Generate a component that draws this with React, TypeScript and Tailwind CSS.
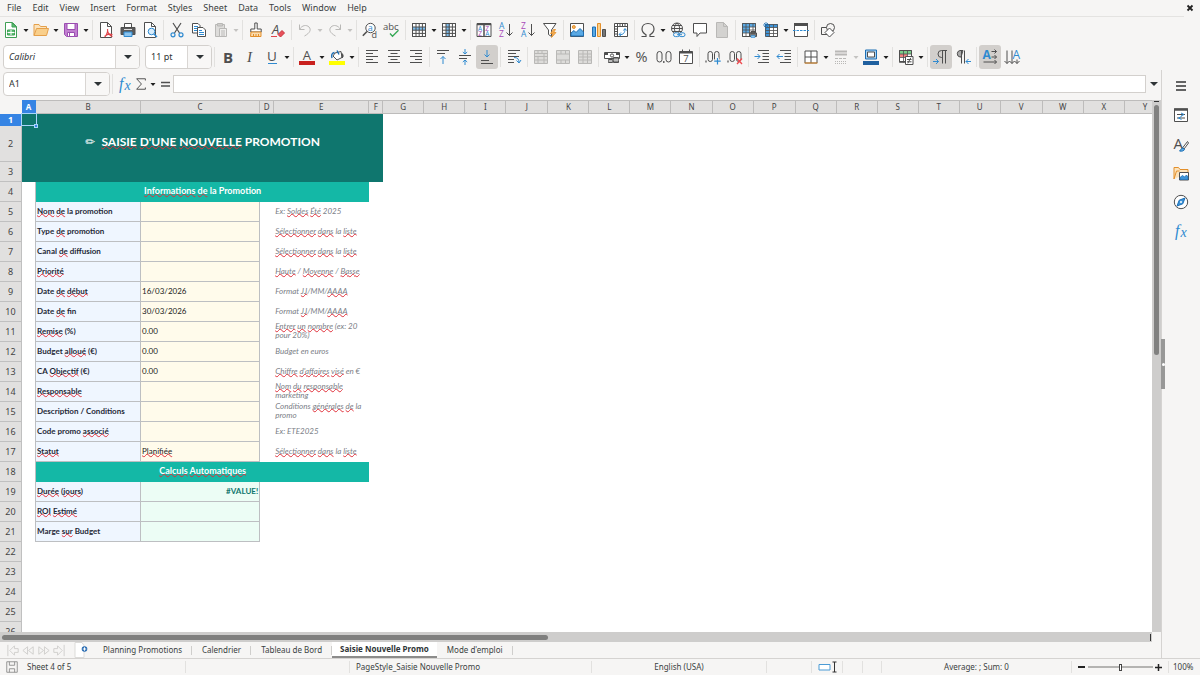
import React from 'react';

const K = '#4f4f4f';
const B = '#2f8ad0';
const G = '#b9b8b6';

type IconProps = { children: React.ReactNode; className?: string };

function Svg({ children, className = 'h-4 w-4' }: IconProps) {
  return (
    <svg viewBox="0 0 16 16" className={`${className} shrink-0 overflow-visible`} fill="none" stroke={K} strokeWidth={1} aria-hidden="true">
      {children}
    </svg>
  );
}

type GlyphProps = { x: number; y: number; size: number; fill?: string; serif?: boolean; italic?: boolean; bold?: boolean; children: string };

function Glyph({ x, y, size, fill = K, serif, italic, bold, children }: GlyphProps) {
  return (
    <text
      x={x}
      y={y}
      fontSize={size}
      fill={fill}
      stroke="none"
      fontStyle={italic ? 'italic' : 'normal'}
      fontWeight={bold ? 700 : 400}
      fontFamily={serif ? '"Liberation Serif", serif' : '"Open Sans", "Noto Sans", sans-serif'}
    >
      {children}
    </text>
  );
}

const page = 'M2.5 .5h7l4 4v11h-11z';
const grid = 'M1.5 1.5h13v13h-13zM1.5 5h13M1.5 8.2h13M1.5 11.4h13M5 1.5v13M8.2 1.5v13M11.4 1.5v13';

const icons: Record<string, React.ReactNode> = {
  new: (
    <>
      <path d={page} fill="#fff" stroke="#3f9f55" />
      <path d="M9 1v4h4.500z" fill="#5cc074" stroke="#3f9f55" />
      <path d="M4.500 8h7v5h-7z" fill="#5cc074" stroke="#3f9f55" />
      <path d="M4.500 10.500h7M8 8v5" stroke="#fff" />
    </>
  ),
  open: (
    <>
      <path d="M1 13.500V2.500h5l1.500 2h6v2" fill="#fbe3bd" stroke="#e5a04a" />
      <path d="M1 13.500l2.500-7h12l-2 7z" fill="#f9cf8b" stroke="#e5a04a" />
    </>
  ),
  save: (
    <>
      <path d="M1.500 1.500h13v13h-11l-2-2z" fill="#c17fd0" stroke="#9a4db0" />
      <path d="M4 1.500h8v6H4z" fill="#fff" stroke="#9a4db0" />
      <path d="M4.500 10.500h7v4h-7z" fill="#fff" stroke="#9a4db0" />
      <path d="M6.500 11v3" stroke="#9a4db0" />
    </>
  ),
  pdf: (
    <>
      <path d={page} fill="#fff" />
      <path d="M9.500 .5v4h4" />
      <path d="M7 15c2-3 3-6 2.500-8M6.500 14.500c2-2 5-3 8-2M9.500 9c.5 2 2.500 4.500 5 5.500" stroke="#e0444a" strokeWidth="1.200" />
    </>
  ),
  print: (
    <>
      <path d="M4.500 6V1.500h7V6" fill="#fff" />
      <path d="M1 5.500h14v7H1z" fill="#5a5a5a" />
      <path d="M4 10h8v4.500H4z" fill="#8cc4ee" stroke="#2f8ad0" />
      <path d="M4 7.500h8" stroke="#ddd" />
    </>
  ),
  preview: (
    <>
      <path d={page} fill="#fff" />
      <path d="M9.500 .5v4h4" />
      <circle cx="9.500" cy="9.500" r="3.300" fill="#d7ecfb" stroke={B} />
      <path d="M12 12l3 3" stroke={B} strokeWidth="1.500" />
    </>
  ),
  cut: (
    <>
      <path d="M4 1l6.500 10M12 1L5.500 11" strokeWidth="1.200" />
      <circle cx="4" cy="12.800" r="2" stroke={B} strokeWidth="1.200" />
      <circle cx="12" cy="12.800" r="2" stroke={B} strokeWidth="1.200" />
    </>
  ),
  copy: (
    <>
      <path d="M1.500 1.500h5.500l2 2v7.500h-7.500z" fill="#fff" />
      <path d="M3 4.500h4M3 6.500h3M3 8.500h3" stroke={B} />
      <path d="M6.500 5.500h5.500l2.500 2.500v6.500h-8z" fill="#fff" />
      <path d="M8 8.500h3M8 10.500h5M8 12.500h5" stroke={B} />
    </>
  ),
  paste: (
    <>
      <path d="M2.500 2.500h9v12h-9z" fill="#dddcda" stroke={G} />
      <path d="M4.500 1.500h5v2.500h-5z" fill="#cfcecc" stroke={G} />
      <path d="M6.500 6.500h7v8h-7z" fill="#eeedec" stroke={G} />
      <path d="M8 9h4M8 11h4M8 13h4" stroke={G} />
    </>
  ),
  clone: (
    <>
      <path d="M6.800 1h2.400v6h4v3H2.800V7h4z" fill="#fff" />
      <path d="M3 10h10v4.500H2.500z" fill="#fbdcae" stroke="#e38f2a" />
      <path d="M5.500 12v2.500M8 12v2.500M10.500 12v2.500" stroke="#e38f2a" />
    </>
  ),
  clear: (
    <>
      <Glyph x={2} y={12} size={13} italic>A</Glyph>
      <path d="M8 12.500l4-4 2.500 2.500-4 4z" fill="#e8505a" stroke="#c8323c" />
      <path d="M1 14.500h6" stroke="#e0444a" />
    </>
  ),
  undo: <path d="M2.500 2.500v5h5M2.500 7.500C5 3 9.500 2.500 12 5c2.500 2.600 1 6-4.500 9" stroke={G} />,
  redo: <path d="M13.500 2.500v5h-5M13.500 7.500C11 3 6.500 2.500 4 5c-2.500 2.600-1 6 4.500 9" stroke={G} />,
  find: (
    <>
      <circle cx="8.500" cy="6" r="4.700" fill="#fff" />
      <path d="M5 9.500L.8 13.800" strokeWidth="1.600" />
      <Glyph x={5.800} y={9} size={9} fill={B}>a</Glyph>
      <Glyph x={9.500} y={15.500} size={9}>d</Glyph>
    </>
  ),
  spell: (
    <>
      <Glyph x={-1} y={8} size={9.500}>abc</Glyph>
      <path d="M6 11.500l2.500 2.800 6-6" stroke="#35a854" strokeWidth="1.300" />
    </>
  ),
  row: (
    <>
      <path d="M1.500 1.500h13v13h-13z" fill="#fff" />
      <path d="M1.500 5h13v3.200h-13z" fill="#7cbcec" stroke="none" />
      <path d={grid} />
    </>
  ),
  col: (
    <>
      <path d="M1.500 1.500h13v13h-13z" fill="#fff" />
      <path d="M5 1.500h4v13H5z" fill="#7cbcec" stroke="none" />
      <path d={grid} />
    </>
  ),
  sort: (
    <>
      <path d="M1 1.500h14v13H1z" fill="#fff" />
      <path d="M1 2.500h14M8 1.500v13" strokeWidth="1.500" />
      <Glyph x={2} y={8.800} size={6.500} fill={B}>A</Glyph>
      <Glyph x={2.200} y={14} size={6.500} fill="#a848b8">Z</Glyph>
      <Glyph x={9.300} y={8.800} size={6.500} fill="#a848b8">Z</Glyph>
      <Glyph x={9.200} y={14} size={6.500} fill={B}>A</Glyph>
    </>
  ),
  asc: (
    <>
      <Glyph x={1} y={7} size={8.500} fill={B}>A</Glyph>
      <Glyph x={1} y={15} size={8.500} fill="#a848b8">Z</Glyph>
      <path d="M11.500 2v11.500M8.500 10.500l3 3 3-3" />
    </>
  ),
  desc: (
    <>
      <Glyph x={1} y={7} size={8.500} fill="#a848b8">Z</Glyph>
      <Glyph x={1} y={15} size={8.500} fill={B}>A</Glyph>
      <path d="M11.500 2v11.500M8.500 10.500l3 3 3-3" />
    </>
  ),
  filter: (
    <>
      <path d="M1.500 1.500h12.500L9.500 8v6.500l-3-2V8z" fill="#fff" />
      <path d="M11.500 7.500l-3 4h2.500l-1.500 4 4.500-5h-2.500l2-3z" fill="#f7b35c" stroke="#e38f2a" strokeWidth=".8" />
    </>
  ),
  image: (
    <>
      <path d="M1.500 1.500h13v13h-13z" fill="#fff" />
      <circle cx="4.800" cy="5" r="1.500" fill="#f7b35c" stroke="#e38f2a" />
      <path d="M2 14v-3l3-2.500 2 2 4-4 3.500 3.500v4z" fill="#5aa9e4" stroke="#1d6fb5" />
    </>
  ),
  chart: (
    <>
      <path d="M1.500 5h3v9.500h-3z" fill="#5aa9e4" stroke="#1d6fb5" />
      <path d="M6.500 1.500h3v13h-3z" fill="#f9cf8b" stroke="#e38f2a" />
      <path d="M11.500 7.500h3v7h-3z" fill="#777" />
    </>
  ),
  pivot: (
    <>
      <path d="M1.500 1.500h13v13h-13z" fill="#fff" />
      <path d="M1.500 4.500h13M4.500 1.500v13M7 2v2M9.500 2v2M12 2v2M2 7h2M2 9.500h2M2 12h2" />
      <path d="M6.500 12.500c4 .5 5.500-2 5.500-5.500M10.500 8.500L12 6.500l1.500 2M8 10.500l-2 2 2 1.500" stroke={B} />
    </>
  ),
  omega: <path d="M1.500 14.500h4.500v-1.800C3 11 2 9.300 2 7c0-3.500 2.700-5.500 6-5.500S14 3.500 14 7c0 2.300-1 4-4 5.700v1.800h4.500" strokeWidth="1.200" />,
  link: (
    <>
      <circle cx="7" cy="6.500" r="5.500" />
      <path d="M7 1c-3.500 3.500-3.500 7.500 0 11M7 1c3.500 3.500 3.500 7.500 0 11M1.500 6.500h11M2.500 3.500h9M2.500 9.500h9" />
      <rect x="3.500" y="10.800" width="6" height="3.800" rx="1.900" fill="#f6f5f4" stroke={B} />
      <rect x="9" y="10.800" width="6" height="3.800" rx="1.900" fill="#f6f5f4" stroke={B} />
      <path d="M7 12.700h5" stroke={B} />
    </>
  ),
  comment: <path d="M1.500 1.500h13v9.500H8l-3 3.500V11H1.500z" fill="#fff" />,
  header: (
    <>
      <path d={page} fill="#d3d2d0" stroke={G} />
      <path d="M9.500 .5v4h4" stroke={G} />
    </>
  ),
  printarea: (
    <>
      <path d="M1.500 1.500h13v13h-13z" fill="#fff" />
      <path d="M1.500 1.500h13v3.500h-13zM1.500 5h7v6h-7z" fill="#5aa9e4" stroke="none" />
      <path d="M1.500 1.500h13v13h-13zM1.500 5h13M1.500 8h13M1.500 11h13M5 1.500v13M8.500 1.500v13M12 1.500v8" strokeWidth=".8" />
      <path d="M8.500 11h7v3.500h-7zM10 9.500h4V11h-4z" fill="#777" />
      <path d="M10 13.500h4v2h-4z" fill="#8cc4ee" stroke={B} strokeWidth=".6" />
    </>
  ),
  freeze: (
    <>
      <path d="M3.500 2.500h11v12h-11z" fill="#fff" />
      <path d="M2 2h13v3.500H2zM2 2h4.500v12.500H2z" fill="#3f94d8" stroke="none" />
      <path d="M2.500 2.500h12v12h-12zM2.500 5.500h12M2.500 8.500h12M2.500 11.500h12M6.500 2.500v12M10.500 2.500v12" strokeWidth=".8" />
      <path d="M3 0v7M0 3h6M1 1l4 4M5 1L1 5" stroke="#1d6fb5" strokeWidth=".8" />
    </>
  ),
  split: (
    <>
      <path d="M1.500 1.500h13v13h-13z" fill="#fff" />
      <path d="M1 2.500h14" strokeWidth="3" />
      <path d="M0 8.500h16" stroke={B} strokeDasharray="2.500 1" />
    </>
  ),
  shapes: (
    <>
      <path d="M1.500 5.500h7v7h-7z" />
      <circle cx="10.500" cy="5.500" r="4" fill="#f6f5f4" />
      <path d="M9.500 6l4.500 4.500-4.500 4.500L5 10.500z" fill="#fff" />
    </>
  ),
  bold: <Glyph x={3} y={13.500} size={15} bold>B</Glyph>,
  italic: <Glyph x={5} y={13} size={15} serif italic>I</Glyph>,
  underline: (
    <>
      <Glyph x={3} y={12} size={13.500}>U</Glyph>
      <path d="M4 14.500h9" stroke={B} />
    </>
  ),
  fontcolor: (
    <>
      <Glyph x={3.800} y={11} size={13}>A</Glyph>
      <path d="M0 14h16" stroke="#c9211e" strokeWidth="4" />
    </>
  ),
  fillcolor: (
    <>
      <path d="M6 4l6-1.500 1 6-5 2.500-4-4z" fill="#fff" />
      <path d="M3 9c-1-3 0-5 2.500-5.500M8 1.500l2 4" stroke="#1d6fb5" strokeWidth="1.400" />
      <path d="M13 4.500c1.500 1.500 1.500 3.500 0 4.500z" fill={K} />
      <path d="M0 14h16" stroke="#ffff00" strokeWidth="4" />
    </>
  ),
  left: <path d="M2 1.500h12M2 4.500h7M2 7.500h12M2 10.500h7M2 13.500h12" />,
  center: <path d="M2 1.500h12M4.500 4.500h7M2 7.500h12M4.500 10.500h7M2 13.500h12" />,
  right: <path d="M2 1.500h12M7 4.500h7M2 7.500h12M7 10.500h7M2 13.500h12" />,
  top: (
    <>
      <path d="M2 1.500h12M2 4.500h8" />
      <path d="M8 15V7.500M5.500 10L8 7.500l2.500 2.500" stroke={B} />
    </>
  ),
  middle: (
    <>
      <path d="M2 6.500h12M2 9.500h8" />
      <path d="M8 0v5M5.800 3L8 5l2.200-2M8 16v-5M5.800 13L8 11l2.200 2" stroke={B} />
    </>
  ),
  bottom: (
    <>
      <path d="M2 11.500h8M2 14.500h12" />
      <path d="M8 1v7M5.500 5.500L8 8l2.500-2.500" stroke={B} />
    </>
  ),
  wrap: (
    <>
      <path d="M2 1.500h12M2 4.500h8M2 7.500h11M2 10.500h6M2 13.500h6" />
      <path d="M8 8.500c3.500 0 5 1.500 5 5M10.500 11.500l2.500 2.500 2-3" stroke={B} />
    </>
  ),
  merge: (
    <>
      <path d="M1.500 1.500h13v13h-13z" fill="#dddcda" stroke={G} />
      <path d="M1.500 4.500h13M1.500 7.500h13M1.500 11h13M5 1.500v3M9 1.500v3M5 7.500v7M11 4.500v10" stroke={G} />
    </>
  ),
  merge2: (
    <>
      <path d="M1.500 1.500h13v13h-13z" fill="#dddcda" stroke={G} />
      <path d="M1.500 5h13M1.500 11h13M6 1.500V5M10.500 1.500V5M6 11v3.500M10.500 11v3.500" stroke={G} />
    </>
  ),
  merge3: (
    <>
      <path d="M1.500 1.500h13v13h-13z" fill="#dddcda" stroke={G} />
      <path d="M1.500 5h13M1.500 8h13M1.500 11h13M6 1.500v13M10.500 1.500v13" stroke={G} />
    </>
  ),
  currency: (
    <>
      <path d="M.5 3.500h15v6H.5z" fill="#fff" />
      <path d="M1 4h3v2H1zM12 4h3v2h-3z" fill={K} stroke="none" />
      <circle cx="8" cy="6.500" r="1.600" />
      <path d="M4.500 10.500h4v3h-4zM9.500 8.500h5v5h-5z" fill="#888" />
      <path d="M9.500 11h5M4.500 12h4" stroke="#eee" />
    </>
  ),
  percent: <Glyph x={1.500} y={13} size={14.500}>%</Glyph>,
  number: (
    <>
      <rect x="1" y="2.500" width="5" height="10.500" rx="2.500" />
      <path d="M7.800 12v2" strokeWidth="1.300" />
      <rect x="10" y="2.500" width="5" height="10.500" rx="2.500" />
    </>
  ),
  date: (
    <>
      <path d="M1.500 2.500h13v12h-13z" fill="#fff" />
      <path d="M1.500 3.500h13" strokeWidth="2" />
      <path d="M4.500 .5v2M11.500 .5v2" />
      <Glyph x={5.200} y={13.300} size={9.500}>7</Glyph>
    </>
  ),
  adddec: (
    <>
      <path d="M1 11.500v2" strokeWidth="1.200" />
      <rect x="3" y="2.500" width="4.500" height="10" rx="2.200" />
      <rect x="9.500" y="2.500" width="4.500" height="10" rx="2.200" />
      <path d="M12.500 8.500v7M9 12h7" stroke="#f6f5f4" strokeWidth="3" />
      <path d="M12.500 9v6.500M9.200 12.200h6.500" stroke={B} strokeWidth="1.200" />
    </>
  ),
  deldec: (
    <>
      <path d="M1 11.500v2" strokeWidth="1.200" />
      <rect x="3" y="2.500" width="4.500" height="10" rx="2.200" />
      <rect x="9.500" y="2.500" width="4.500" height="10" rx="2.200" />
      <path d="M10 9.500l5 5.500M15 9.500L10 15" stroke="#f0494f" strokeWidth="1.300" />
    </>
  ),
  indent: (
    <>
      <path d="M4 1.500h11M8.500 4.500h6.500M8.500 7.500h6.500M8.500 10.500h6.500M4 13.500h11" />
      <path d="M.5 7.500H6M3.500 5L6 7.500 3.500 10" stroke={B} />
    </>
  ),
  outdent: (
    <>
      <path d="M4 1.500h11M8.500 4.500h6.500M8.500 7.500h6.500M8.500 10.500h6.500M4 13.500h11" />
      <path d="M1 7.500h6M3.500 5L1 7.500 3.500 10" stroke={B} />
    </>
  ),
  borders: (
    <>
      <path d="M2 2h12v12H2z" fill="#fff" />
      <path d="M8 2v12M2 8h12" />
      <path d="M1.500 14h13" stroke="#e38f2a" />
    </>
  ),
  borderstyle: (
    <>
      <path d="M2 2.500h12M2 5.500h12" stroke={G} strokeWidth="2" />
      <path d="M2 9.500h12" stroke={G} strokeDasharray="3 1" />
      <path d="M2 12.500h12M2 14.500h12" stroke={G} strokeDasharray="1 1" />
    </>
  ),
  bordercolor: (
    <>
      <path d="M2.500 1h11v9h-11z" fill="#a9d3f5" stroke="#1d6fb5" />
      <path d="M4.500 3h7v5h-7z" fill="#fff" />
      <path d="M0 14h16" stroke="#20609f" strokeWidth="4" />
    </>
  ),
  conditional: (
    <>
      <path d="M1.500 1.500h12v11h-12z" fill="#fff" />
      <path d="M2 2h11v3H2z" fill="#79cf8a" stroke="none" />
      <path d="M2 5h7v3H2z" fill="#f08080" stroke="none" />
      <path d="M1.500 1.500h12v12h-12zM1.500 5h12M1.500 8.500h12M5.500 1.500v12M9.500 1.500v12" strokeWidth=".8" />
      <path d="M7.500 7.500h7.500v8H7.500z" fill="#fff" />
      <path d="M9 10.500h4.500M9 12.800h4.500M12.800 8.800l-3 5.500" />
    </>
  ),
  ltr: (
    <>
      <path d="M14 1.500H8.500a3.500 3.500 0 000 7H9M9.500 1.500v13M12.500 1.500v13" />
      <path d="M0 12.500h5.500M3 10l2.500 2.500L3 15" stroke={B} />
    </>
  ),
  rtl: (
    <>
      <path d="M8 1.500H5a3.300 3.300 0 000 6.500h1z" fill="#aaa" />
      <path d="M6.500 1.500v13M9.500 1.500v13" />
      <path d="M16 12.500h-5M13.500 10L11 12.500l2.500 2.500" stroke={B} />
    </>
  ),
  hor: (
    <>
      <Glyph x={0.500} y={10} size={12} fill={B} bold>A</Glyph>
      <path d="M9.500 2.500h5M12.500.5l2 2-2 2M9.500 8h5M12.500 6l2 2-2 2M1.500 13h13M12.500 11l2 2-2 2" />
    </>
  ),
  ver: (
    <>
      <path d="M3 1.500v13M.5 12L3 14.500 5.500 12M8 1.500v13M5.500 12L8 14.500l2.500-2.500M13 10.500v4M10.500 12l2.500 2.500 2.500-2.500" />
      <Glyph x={8.500} y={10} size={12} fill={B}>A</Glyph>
    </>
  ),
  menu: <path d="M3 4h10M3 8h10M3 12h10" stroke="#333" strokeWidth="1.300" />,
  props: (
    <>
      <path d="M1.500 2h13v12.500h-13z" fill="#fff" />
      <path d="M1 2.500h14" strokeWidth="2.500" />
      <path d="M4 7.500h8M4 11h8" />
      <path d="M8 6l3 1.500L8 9M8.500 9.500L5.500 11l3 1.500" stroke={B} />
    </>
  ),
  styles: (
    <>
      <Glyph x={0.500} y={12.500} size={15}>A</Glyph>
      <path d="M14.500 5.500L9.500 12l1.500 1L15.500 7z" fill="#fff" />
      <path d="M10 12c-2 0-2 2-3.500 3 2.500.5 4.500 0 5-1.800z" fill="#5aa9e4" stroke="#1d6fb5" />
    </>
  ),
  gallery: (
    <>
      <path d="M1 14V2.500h4.500l1.500 2h8V8" fill="#fbe3bd" stroke="#e38f2a" />
      <path d="M1 14L3.500 6h3" stroke="#e38f2a" />
      <path d="M6.500 7.500h9v7.500h-9z" fill="#fff" />
      <path d="M7 14.500v-2l2.500-2 2 1.500 2-2 1.500 2v2.500z" fill="#3f94d8" stroke="#1d6fb5" strokeWidth=".8" />
    </>
  ),
  navigator: (
    <>
      <circle cx="8" cy="8" r="6.700" fill="#fff" />
      <path d="M12 4l-2.200 5.800L4 12l2.200-5.800z" fill="#3f94d8" stroke="#1d6fb5" />
      <circle cx="8" cy="8" r="1" fill="#fff" stroke="none" />
    </>
  ),
  fx: (
    <>
      <Glyph x={2} y={12.500} size={16} serif italic fill={B}>f</Glyph>
      <Glyph x={7.500} y={14} size={14} serif italic fill={B}>x</Glyph>
    </>
  ),
  sigma: <path d="M13 4V2H3l5.500 6L3 14h10v-2" strokeWidth="1.100" />,
  equals: <path d="M4 6.500h9M4 10h9" strokeWidth="1.600" />,
  savestate: (
    <>
      <path d="M2 2h12v12H2z" stroke="#8a8a8a" />
      <path d="M5 2v4h6V2M5 14v-4h6v4" stroke="#8a8a8a" />
    </>
  ),
};

function Arrow({ off }: { off?: boolean }) {
  return (
    <svg viewBox="0 0 8 8" className="h-2 w-2" aria-hidden="true">
      <path d="M1.500 3h5L4 6z" fill={off ? '#c4c3c1' : '#1e1e1e'} />
    </svg>
  );
}

type Tool = { icon: string; label: string; drop?: boolean; off?: boolean; on?: boolean };

const t = (icon: string, label: string, flags: Omit<Tool, 'icon' | 'label'> = {}): Tool => ({ icon, label, ...flags });

const standardTools: Tool[][] = [
  [t('new', 'New', { drop: true }), t('open', 'Open', { drop: true }), t('save', 'Save', { drop: true })],
  [t('pdf', 'Export as PDF'), t('print', 'Print'), t('preview', 'Print Preview')],
  [t('cut', 'Cut'), t('copy', 'Copy'), t('paste', 'Paste', { drop: true, off: true })],
  [t('clone', 'Clone Formatting'), t('clear', 'Clear Formatting')],
  [t('undo', 'Undo', { drop: true, off: true }), t('redo', 'Redo', { drop: true, off: true })],
  [t('find', 'Find and Replace'), t('spell', 'Spelling')],
  [t('row', 'Row', { drop: true }), t('col', 'Column', { drop: true })],
  [t('sort', 'Sort'), t('asc', 'Sort Ascending'), t('desc', 'Sort Descending'), t('filter', 'AutoFilter')],
  [t('image', 'Insert Image'), t('chart', 'Insert Chart'), t('pivot', 'Pivot Table')],
  [t('omega', 'Special Character', { drop: true }), t('link', 'Hyperlink'), t('comment', 'Comment'), t('header', 'Headers and Footers', { off: true })],
  [t('printarea', 'Print Area'), t('freeze', 'Freeze Rows and Columns', { drop: true }), t('split', 'Split Window')],
  [t('shapes', 'Draw Functions')],
];

const formatTools: Tool[][] = [
  [t('bold', 'Bold'), t('italic', 'Italic'), t('underline', 'Underline', { drop: true })],
  [t('fontcolor', 'Font Color', { drop: true }), t('fillcolor', 'Background Color', { drop: true })],
  [t('left', 'Align Left'), t('center', 'Align Center'), t('right', 'Align Right')],
  [t('top', 'Align Top'), t('middle', 'Center Vertically'), t('bottom', 'Align Bottom', { on: true })],
  [t('wrap', 'Wrap Text')],
  [t('merge', 'Merge and Center', { off: true }), t('merge2', 'Merge Cells', { off: true }), t('merge3', 'Unmerge Cells', { off: true })],
  [t('currency', 'Currency', { drop: true }), t('percent', 'Percent'), t('number', 'Number'), t('date', 'Date')],
  [t('adddec', 'Add Decimal Place'), t('deldec', 'Delete Decimal Place')],
  [t('indent', 'Increase Indent'), t('outdent', 'Decrease Indent')],
  [t('borders', 'Borders', { drop: true }), t('borderstyle', 'Border Style', { drop: true, off: true }), t('bordercolor', 'Border Color', { drop: true })],
  [t('conditional', 'Conditional', { drop: true })],
  [t('ltr', 'Left-To-Right', { on: true }), t('rtl', 'Right-To-Left')],
  [t('hor', 'Text Horizontal', { on: true }), t('ver', 'Text Vertical')],
];

function Divider() {
  return (
    <div className="flex w-[5px] shrink-0 justify-center">
      <div className="h-5 w-px bg-[#e2e1df]" />
    </div>
  );
}

function ToolGroups({ groups }: { groups: Tool[][] }) {
  return (
    <>
      {groups.map((group, i) => (
        <React.Fragment key={i}>
          {i > 0 && <Divider />}
          {group.map((tool) => (
            <React.Fragment key={tool.icon}>
              <button
                type="button"
                aria-label={tool.label}
                disabled={tool.off}
                className={`flex h-6 w-[22px] shrink-0 items-center justify-center rounded-[3px] ${tool.on ? 'bg-[#d2cfcc]' : ''}`}
              >
                <Svg>{icons[tool.icon]}</Svg>
              </button>
              {tool.drop && (
                <button type="button" aria-label={`${tool.label} options`} disabled={tool.off} className="flex h-6 w-2 shrink-0 items-center justify-center">
                  <Arrow off={tool.off} />
                </button>
              )}
            </React.Fragment>
          ))}
        </React.Fragment>
      ))}
    </>
  );
}

function Combo({ label, value, width, italic }: { label: string; value: string; width: string; italic?: boolean }) {
  return (
    <div className={`flex h-6 shrink-0 overflow-hidden rounded-[4px] border border-[#d3d0cd] bg-white ${width}`}>
      <input aria-label={label} defaultValue={value} className={`min-w-0 flex-1 px-[5px] text-[9px] text-[#2e3436] outline-none ${italic ? 'italic' : ''}`} />
      <button type="button" aria-label={`${label} list`} className="flex w-6 items-center justify-center border-l border-[#d9d6d3] bg-[#f8f7f6]">
        <svg viewBox="0 0 8 4" className="h-1 w-2" aria-hidden="true">
          <path d="M0 0h8L4 4z" fill="#2e3436" />
        </svg>
      </button>
    </div>
  );
}

/* "~" around a run marks it as unknown to the spell checker. */
function Spelled({ text }: { text: string }) {
  return (
    <>
      {text.split('~').map((part, i) =>
        i % 2 ? (
          <span key={i} className="underline decoration-[#e0303a] decoration-wavy decoration-1 [text-decoration-skip-ink:none] [text-underline-offset:-1px]">
            {part}
          </span>
        ) : (
          part
        ),
      )}
    </>
  );
}

const columns: [string, string][] = [
  ['A', 'w-[14px]'], ['B', 'w-[105px]'], ['C', 'w-[119px]'], ['D', 'w-[14px]'], ['E', 'w-[95px]'], ['F', 'w-[14px]'],
  ...'GHIJKLMNOPQRSTUVWXY'.split('').map((c, i): [string, string] => [c, i % 6 === 3 ? 'w-[42px]' : 'w-[41px]']),
];

type Entry = { row: number; label: string; value: string; hint: string };

const entries: Entry[] = [
  { row: 5, label: '~Nom~ ~de~ la promotion', value: '', hint: 'Ex: ~Soldes~ ~Été~ 2025' },
  { row: 6, label: 'Type ~de~ promotion', value: '', hint: '~Sélectionner~ ~dans~ la ~liste~' },
  { row: 7, label: 'Canal ~de~ diffusion', value: '', hint: '~Sélectionner~ ~dans~ la ~liste~' },
  { row: 8, label: '~Priorité~', value: '', hint: '~Haute~ / ~Moyenne~ / ~Basse~' },
  { row: 9, label: 'Date ~de~ ~début~', value: '16/03/2026', hint: 'Format ~JJ~/MM/~AAAA~' },
  { row: 10, label: 'Date ~de~ fin', value: '30/03/2026', hint: 'Format ~JJ~/MM/~AAAA~' },
  { row: 11, label: '~Remise~ (%)', value: '0.00', hint: '~Entrer~ ~un~ ~nombre~ (ex: 20 pour 20%)' },
  { row: 12, label: 'Budget ~alloué~ (€)', value: '0.00', hint: 'Budget en euros' },
  { row: 13, label: 'CA ~Objectif~ (€)', value: '0.00', hint: "~Chiffre~ ~d'affaires~ ~visé~ en €" },
  { row: 14, label: '~Responsable~', value: '', hint: '~Nom~ ~du~ ~responsable~ marketing' },
  { row: 15, label: 'Description / Conditions', value: '', hint: 'Conditions ~générales~ ~de~ la promo' },
  { row: 16, label: 'Code promo ~associé~', value: '', hint: 'Ex: ETE2025' },
  { row: 17, label: '~Statut~', value: '~Planifiée~', hint: '~Sélectionner~ ~dans~ la ~liste~' },
];

const results = [
  { row: 19, label: '~Durée~ (~jours~)', value: '#VALUE!' },
  { row: 20, label: '~ROI~ ~Estimé~', value: '' },
  { row: 21, label: 'Marge ~sur~ Budget', value: '' },
];

function RowHead({ n, active }: { n: number; active?: boolean }) {
  return (
    <th
      scope="row"
      className={`border-r border-b p-0 text-center font-[Noto_Sans,sans-serif] text-[9px] leading-[10px] ${
        active ? 'border-[#3584e4] bg-[#3584e4] font-bold text-white' : 'border-[#c0c0c0] bg-[#e1e0df] font-normal text-[#444]'
      }`}
    >
      {n}
    </th>
  );
}

const labelCell = 'border-r border-b border-[#bdbfc2] bg-[#eff6ff] p-0 pb-0.5 pl-px text-left text-[8px] leading-[10px] font-bold text-[#1f2937]';
const sectionCell = 'bg-[#14b8a6] p-0 pb-0.5 text-center text-[9px] leading-3 font-bold text-white';
const edgeCell = 'border-r border-[#bdbfc2] p-0';

function Sheet() {
  return (
    <table className="w-[1166px] table-fixed border-separate border-spacing-0 font-[Lato,sans-serif]">
      <colgroup>
        <col className="w-[22px]" />
        {columns.map(([name, width]) => (
          <col key={name} className={width} />
        ))}
      </colgroup>
      <thead>
        <tr className="h-[14px] font-[Noto_Sans,sans-serif] text-[8px] leading-[12px]">
          <td className="bg-[#f6f5f4] p-0" />
          {columns.map(([name]) => (
            <th
              key={name}
              scope="col"
              className={`border-t border-r border-b p-0 ${
                name === 'A' ? 'border-[#3584e4] bg-[#3584e4] font-bold text-white' : 'border-[#bdbcbb] bg-[#e1e0df] font-normal text-[#444]'
              }`}
            >
              {name}
            </th>
          ))}
        </tr>
      </thead>
      <tbody>
        <tr className="h-3">
          <RowHead n={1} active />
          <td className="relative bg-[#0f766e] p-0">
            <div className="absolute -inset-x-px -top-px bottom-0 border border-[#a9d5fb]" />
            <div className="absolute -right-0.5 -bottom-0.5 z-10 h-1 w-1 border border-[#a9d5fb] bg-[#3584e4]" />
          </td>
          <td colSpan={5} className="bg-[#0f766e] p-0" />
        </tr>
        <tr className="h-9">
          <RowHead n={2} />
          <td className="bg-[#0f766e] p-0" />
          <td colSpan={4} className="bg-[#0f766e] p-0 pb-1 text-center text-[12px] leading-4 font-bold text-white">
            <span className="mr-1.5 font-[DejaVu_Sans,sans-serif] text-[12px] font-normal">✏</span>
            <Spelled text="~SAISIE~ ~D'UNE~ ~NOUVELLE~ PROMOTION" />
          </td>
          <td className="bg-[#0f766e] p-0" />
        </tr>
        <tr className="h-5">
          <RowHead n={3} />
          <td colSpan={6} className="bg-[#0f766e] p-0" />
        </tr>
        <tr className="h-5">
          <RowHead n={4} />
          <td className={edgeCell} />
          <td colSpan={4} className={sectionCell}>
            <Spelled text="~Informations~ ~de~ la Promotion" />
          </td>
        </tr>
        {entries.map((e) => (
          <tr key={e.row} className="h-5">
            <RowHead n={e.row} />
            <td className={edgeCell} />
            <td className={labelCell}><Spelled text={e.label} /></td>
            <td className="border-r border-b border-[#bdbfc2] bg-[#fffbeb] p-0 pb-0.5 pl-px text-[8px] leading-[10px] text-[#222]">
              <Spelled text={e.value} />
            </td>
            <td />
            <td className="p-0 pb-0.5 pl-px text-[8px] leading-[9px] text-[#7b8087] italic"><Spelled text={e.hint} /></td>
          </tr>
        ))}
        <tr className="h-5">
          <RowHead n={18} />
          <td className={edgeCell} />
          <td colSpan={4} className={sectionCell}>
            <Spelled text="~Calculs~ ~Automatiques~" />
          </td>
        </tr>
        {results.map((r) => (
          <tr key={r.row} className="h-5">
            <RowHead n={r.row} />
            <td className={edgeCell} />
            <td className={labelCell}><Spelled text={r.label} /></td>
            <td className="border-r border-b border-[#bdbfc2] bg-[#ecfdf5] p-0 pr-px pb-0.5 text-right text-[8px] leading-[10px] font-bold text-[#0f766e]">
              {r.value}
            </td>
          </tr>
        ))}
        {[22, 23, 24, 25, 26].map((n) => (
          <tr key={n} className="h-5">
            <RowHead n={n} />
          </tr>
        ))}
      </tbody>
    </table>
  );
}

const menus = ['File', 'Edit', 'View', 'Insert', 'Format', 'Styles', 'Sheet', 'Data', 'Tools', 'Window', 'Help'];
const tabs = ['Planning Promotions', 'Calendrier', 'Tableau de Bord', 'Saisie Nouvelle Promo', "Mode d'emploi"];
const panels: [string, string][] = [
  ['menu', 'Sidebar Settings'], ['props', 'Properties'], ['styles', 'Styles'], ['gallery', 'Gallery'], ['navigator', 'Navigator'], ['fx', 'Functions'],
];
const sheetMoves: [string, string][] = [
  ['First sheet', 'M2 2v12M4 8l5-5v3h4v4H9v3z'],
  ['Previous sheet', 'M2 8l5-4v8zM8 8l5-4v8z'],
  ['Next sheet', 'M14 8L9 4v8zM8 8L3 4v8z'],
  ['Last sheet', 'M14 2v12M12 8L7 3v3H3v4h4v3z'],
];

export default function App() {
  return (
    <div className="flex h-screen flex-col overflow-hidden bg-[#f6f5f4] font-[Noto_Sans,sans-serif] text-[#3a3f41]">
      <header className="shrink-0">
        <div className="flex h-4 items-center pr-1.5">
          <nav className="flex flex-1 gap-[11px] pl-[7px] text-[9px] leading-4" aria-label="Menu">
            {menus.map((m) => (
              <button key={m} type="button">{m}</button>
            ))}
          </nav>
          <button type="button" aria-label="Close document">
            <svg viewBox="0 0 8 8" className="h-2 w-2" stroke="#222" strokeWidth="1.800" aria-hidden="true">
              <path d="M1.500 1.500l5 5M6.500 1.500l-5 5" />
            </svg>
          </button>
        </div>
        <div className="mr-4 h-px bg-[#e4e3e1]" />
        <div className="flex h-[26px] items-center" role="toolbar" aria-label="Standard">
          <ToolGroups groups={standardTools} />
        </div>
        <div className="flex h-[27px] items-center pl-[3px]" role="toolbar" aria-label="Formatting">
          <Combo label="Font Name" value="Calibri" width="mr-[5px] w-[137px]" italic />
          <Combo label="Font Size" value="11 pt" width="w-[67px]" />
          <Divider />
          <ToolGroups groups={formatTools} />
        </div>
      </header>

      <div className="flex min-h-0 flex-1">
        <main className="flex min-w-0 flex-1 flex-col">
          <div className="flex h-[30px] shrink-0 items-center pb-0.5 pl-[3px]">
            <Combo label="Name Box" value="A1" width="w-[107px]" />
            <Divider />
            <button type="button" aria-label="Function Wizard" className="ml-0.5 flex h-6 w-4 items-center justify-center"><Svg>{icons.fx}</Svg></button>
            <button type="button" aria-label="Select Function" className="flex h-6 w-4 items-center justify-center"><Svg className="h-[14px] w-[14px]">{icons.sigma}</Svg></button>
            <button type="button" aria-label="Select Function options" className="flex h-6 w-2 items-center justify-center"><Arrow /></button>
            <button type="button" aria-label="Formula" className="flex h-6 w-4 items-center justify-center"><Svg>{icons.equals}</Svg></button>
            <input aria-label="Input line" className="h-[18px] min-w-0 flex-1 border border-[#d3d0cd] bg-white px-1 text-[9px] outline-none" />
            <button type="button" aria-label="Expand formula bar" className="flex w-[15px] justify-center">
              <svg viewBox="0 0 8 4" className="h-1 w-2" aria-hidden="true">
                <path d="M0 0h8L4 4z" fill="#2e3436" />
              </svg>
            </button>
          </div>
          <div className="flex min-h-0 flex-1">
            <div className="min-w-0 flex-1 overflow-hidden bg-white">
              <Sheet />
            </div>
            <div className="flex w-[9px] shrink-0 flex-col items-center bg-[#cecdcc]">
              <div className="mt-px h-px w-[5px] bg-[#333]" />
              <div className="mt-[3px] h-[250px] w-[5px] rounded-full bg-[#818180]" />
            </div>
          </div>
          <div className="mr-[9px] flex h-[10px] shrink-0 items-center justify-between bg-[#cecdcc] pr-px pl-0.5">
            <div className="h-[5px] w-[546px] rounded-full bg-[#7f7f7e]" />
            <div className="h-[7px] w-px bg-[#333]" />
          </div>
          <div className="flex h-4 shrink-0 items-stretch text-[8px] leading-[14px]">
            <div className="flex w-[93px] shrink-0 items-center pl-1.5">
              {sheetMoves.map(([label, d]) => (
                <button key={label} type="button" aria-label={label} disabled>
                  <svg viewBox="0 0 16 16" className="h-[15px] w-[15px]" fill="none" stroke="#cfcecc" aria-hidden="true"><path d={d} /></svg>
                </button>
              ))}
              <button type="button" aria-label="Add sheet" className="ml-2">
                <svg viewBox="0 0 14 16" className="h-4 w-[14px]" aria-hidden="true">
                  <path d="M1 .5h7l2 3v12H1z" fill="#fff" stroke="#dcdbd9" />
                  <circle cx="10.500" cy="7" r="2.800" fill="#2a6db3" />
                  <path d="M10.500 5.300v3.400M8.800 7h3.400" stroke="#fff" />
                </svg>
              </button>
            </div>
            {tabs.map((tab) => {
              const active = tab === 'Saisie Nouvelle Promo';
              return (
                <button
                  key={tab}
                  type="button"
                  aria-pressed={active}
                  className={`flex items-center whitespace-nowrap ${active ? 'border-b-2 border-[#8c8c8b] bg-white px-2 font-bold text-[#2e3436]' : 'pl-2.5'}`}
                >
                  {tab}
                  {!active && <span className="ml-[9px] h-[9px] w-px bg-[#cfcecc]" />}
                </button>
              );
            })}
          </div>
        </main>
        <aside className="relative flex w-[39px] shrink-0 flex-col items-center gap-[13px] border-l border-[#d5d3d1] pt-2" aria-label="Sidebar">
          {panels.map(([icon, label]) => (
            <button key={label} type="button" aria-label={label}>
              <Svg>{icons[icon]}</Svg>
            </button>
          ))}
          <button type="button" aria-label="Hide sidebar" className="absolute top-[269px] -left-px flex h-[50px] w-1 items-center justify-center bg-[#989897]">
            <span className="h-[3px] w-[3px] rounded-full bg-white" />
          </button>
        </aside>
      </div>

      <footer className="flex h-[17px] shrink-0 items-center border-t border-[#d5d3d1] text-[8px] leading-3 [&>*]:h-3 [&>*]:shrink-0 [&>*+*]:border-l [&>*+*]:border-[#e2e1df]">
        <div className="flex w-[185px] items-center gap-2 pl-[5px]">
          <Svg className="h-[14px] w-[14px]">{icons.savestate}</Svg>
          Sheet 4 of 5
        </div>
        <div className="w-[164px]" />
        <div className="min-w-0 flex-1 pl-1.5">PageStyle_Saisie Nouvelle Promo</div>
        <div className="w-[175px] text-center">English (USA)</div>
        <div className="w-[45px]" />
        <div className="flex w-[31px] items-center gap-1 pl-1.5">
          <svg viewBox="0 0 18 12" className="h-3 w-[18px] overflow-visible" fill="none" aria-hidden="true">
            <path d="M1 3.500h11v5.500H1z" stroke="#4b9bd5" fill="#fff" />
            <path d="M14.500 1h4M16.500 1v10M14.500 11h4" stroke="#333" />
          </svg>
        </div>
        <div className="w-5" />
        <div className="w-[19px]" />
        <div className="w-[190px] text-center">Average: ; Sum: 0</div>
        <div className="flex w-[97px] items-center justify-between px-[5px]">
          <button type="button" aria-label="Zoom out" className="flex w-[9px] justify-center"><span className="h-[2px] w-[7px] bg-[#222]" /></button>
          <input
            type="range"
            aria-label="Zoom"
            defaultValue={50}
            className="h-2 w-[65px] appearance-none bg-transparent [&::-webkit-slider-runnable-track]:h-[2px] [&::-webkit-slider-runnable-track]:bg-[#b5b4b2] [&::-webkit-slider-thumb]:-mt-[2px] [&::-webkit-slider-thumb]:h-[7px] [&::-webkit-slider-thumb]:w-[3px] [&::-webkit-slider-thumb]:appearance-none [&::-webkit-slider-thumb]:border [&::-webkit-slider-thumb]:border-[#444] [&::-webkit-slider-thumb]:bg-white"
          />
          <button type="button" aria-label="Zoom in" className="flex w-[9px] justify-center">
            <svg viewBox="0 0 7 7" className="h-[7px] w-[7px]" stroke="#222" strokeWidth="1.500" aria-hidden="true"><path d="M3.500 0v7M0 3.500h7" /></svg>
          </button>
        </div>
        <div className="w-8 pl-1">100%</div>
      </footer>
    </div>
  );
}
